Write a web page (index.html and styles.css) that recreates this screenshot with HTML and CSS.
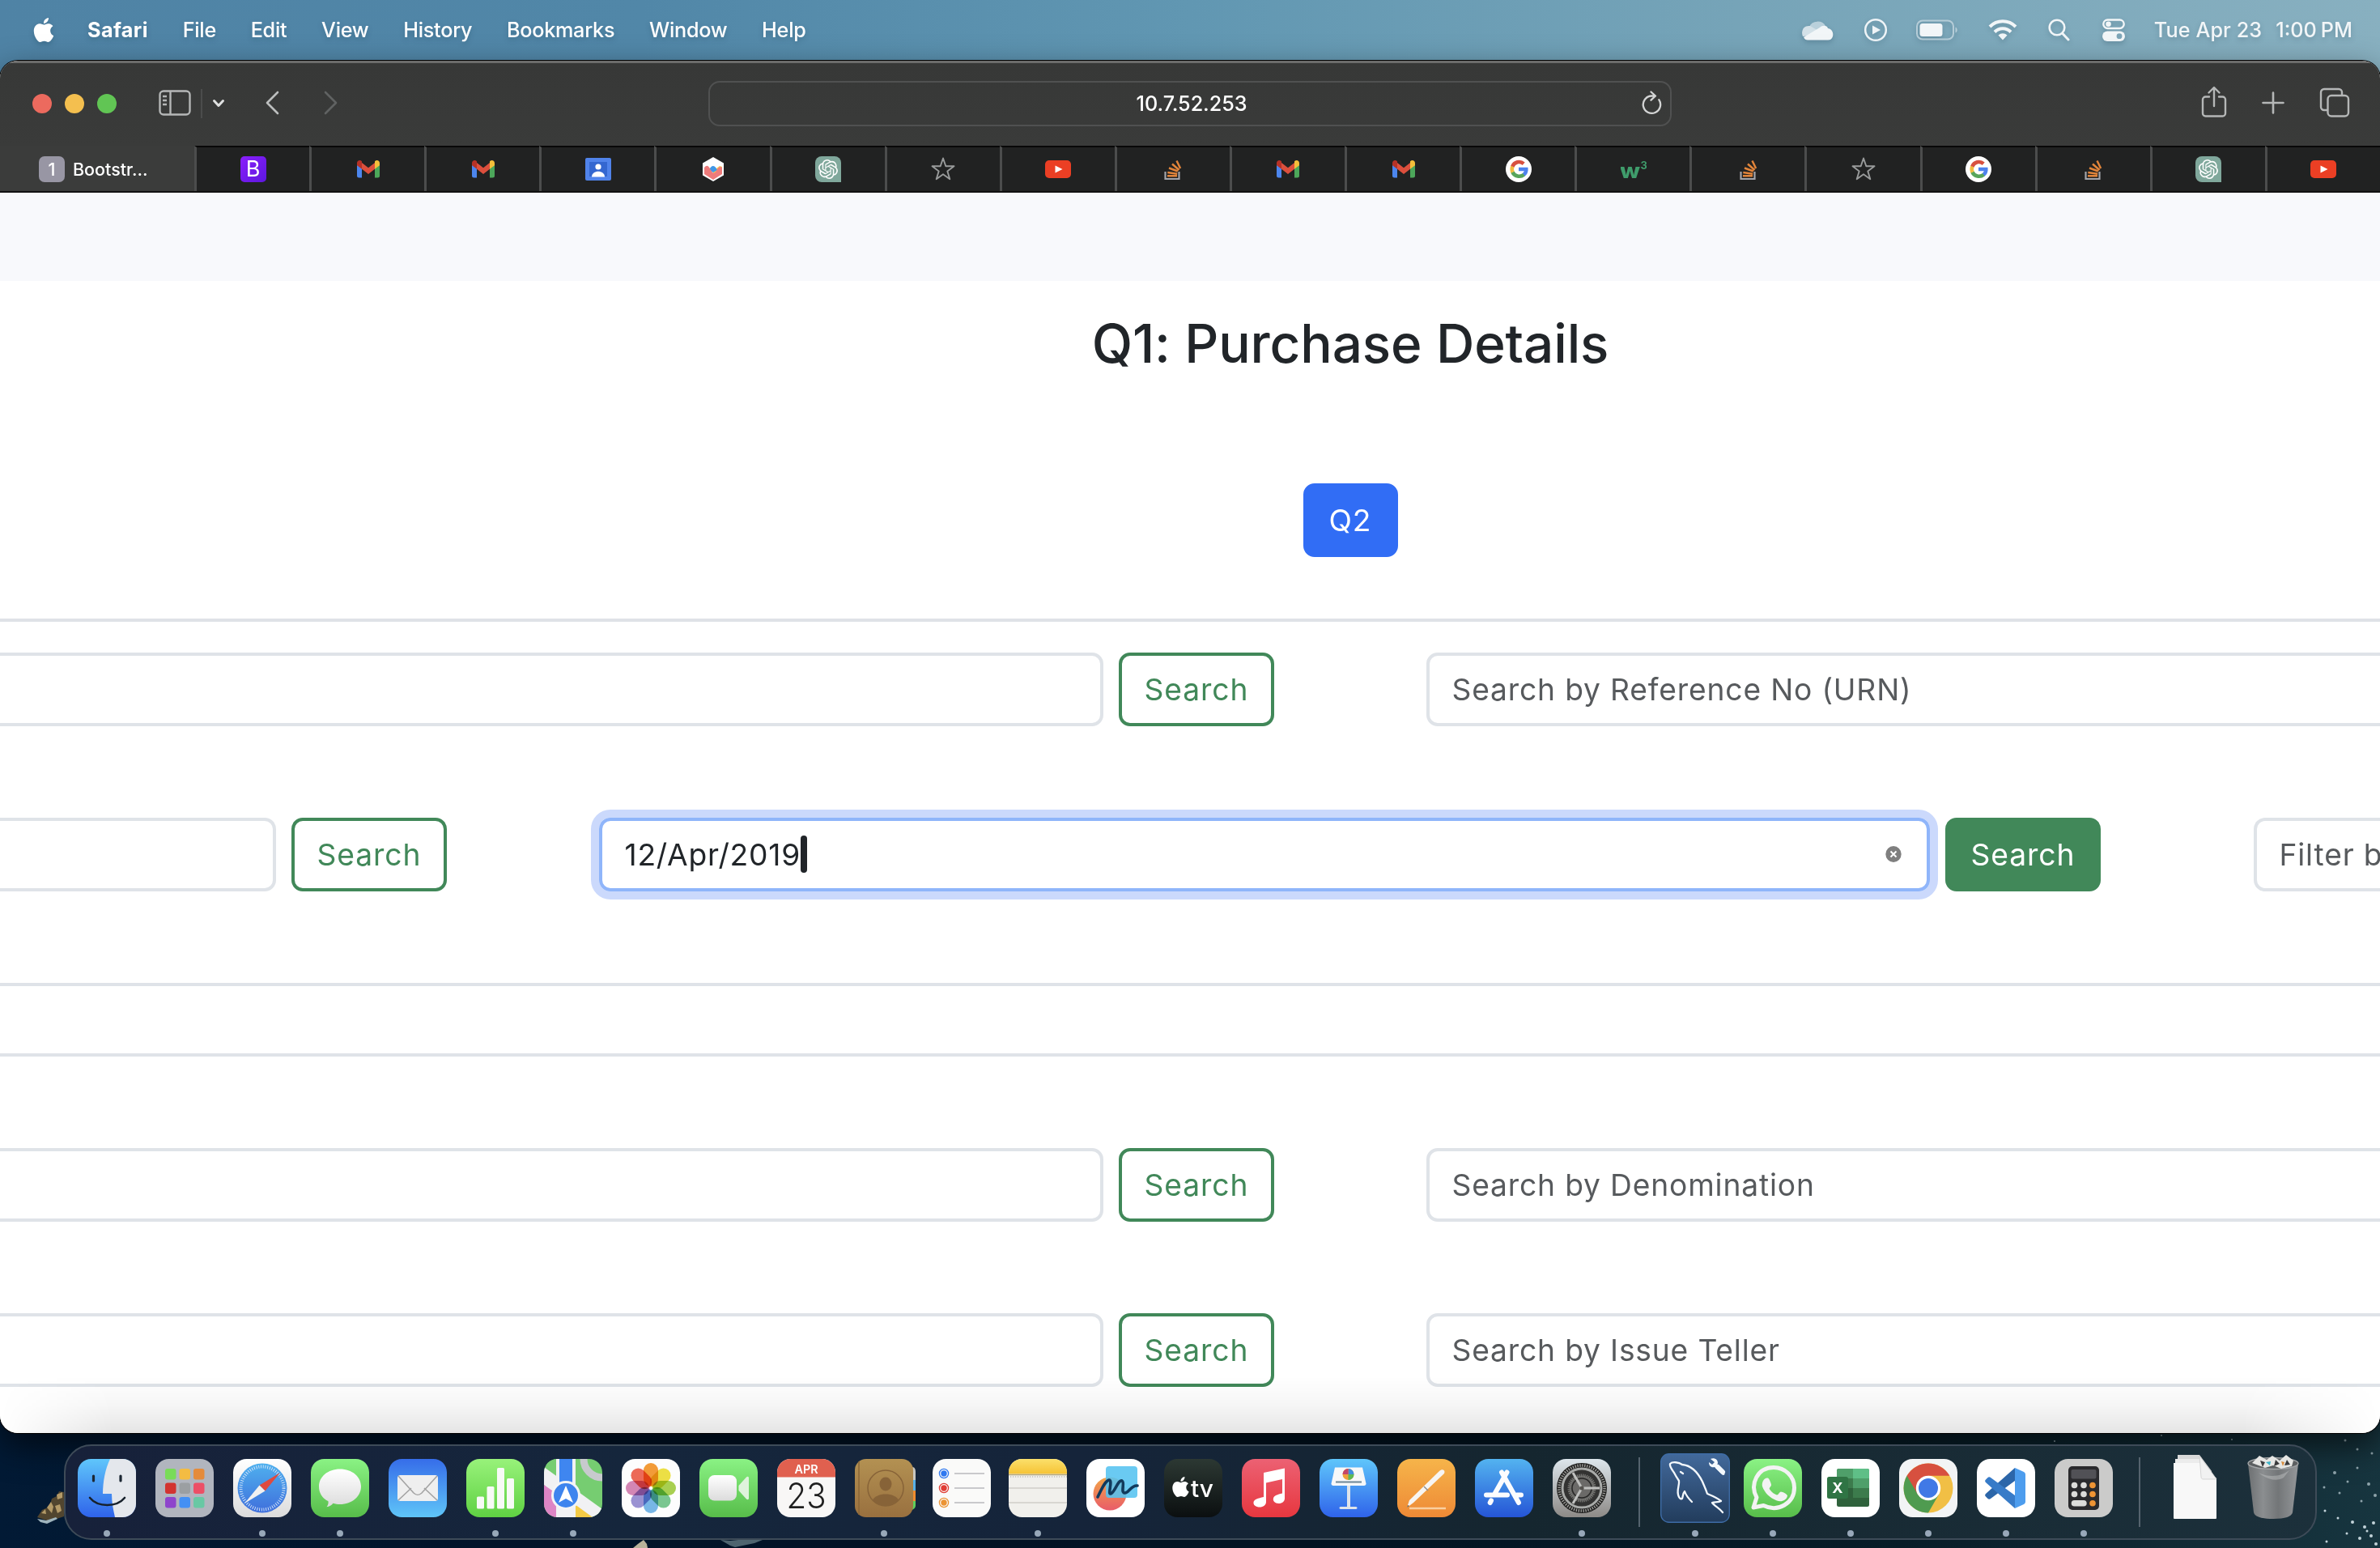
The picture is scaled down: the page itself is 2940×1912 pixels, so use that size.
FILE: index.html
```html
<!DOCTYPE html>
<html lang="en">
<head>
<meta charset="utf-8">
<title>Purchase Details</title>
<link rel="stylesheet" href="styles.css">
</head>
<body>
<svg class="defs" aria-hidden="true">
  <defs>
    <path id="apple" d="M12.152 6.896c-.948 0-2.415-1.078-3.96-1.04-2.04.027-3.91 1.183-4.961 3.014-2.117 3.675-.546 9.103 1.519 12.09 1.013 1.454 2.208 3.09 3.792 3.039 1.52-.065 2.09-.987 3.935-.987 1.831 0 2.35.987 3.96.948 1.637-.026 2.676-1.48 3.676-2.948 1.156-1.688 1.636-3.325 1.662-3.415-.039-.013-3.182-1.221-3.22-4.857-.026-3.04 2.48-4.494 2.597-4.559-1.429-2.09-3.623-2.324-4.39-2.376-2-.156-3.675 1.09-4.61 1.09zM15.53 3.83c.843-1.012 1.4-2.427 1.245-3.83-1.207.052-2.662.805-3.532 1.818-.78.896-1.454 2.338-1.273 3.714 1.338.104 2.715-.688 3.559-1.701"/>
    <symbol id="gmail" viewBox="0 0 32 32">
      <path fill="#4c86ee" d="M2 9v15a2.500 2.500 0 0 0 2.500 2.500H8V14z"/>
      <path fill="#4ca75a" d="M30 9v15a2.500 2.500 0 0 1-2.500 2.500H24V14z"/>
      <path fill="#dc4f3d" d="M8 8l8 6.200L24 8v7.800l-8 6.200-8-6.200z"/>
      <path fill="#b63227" d="M2 8.500C2 5.300 5.500 4 8 6.200v9.600L2 11.300z"/>
      <path fill="#f4bf3a" d="M30 8.500C30 5.300 26.500 4 24 6.200v9.600l6-4.500z"/>
    </symbol>
    <symbol id="classroom" viewBox="0 0 32 32">
      <rect x="0" y="2" width="32" height="28" rx="2" fill="#5083ea"/>
      <rect x="5" y="7" width="22" height="18" fill="#3467d0"/>
      <circle cx="16" cy="13" r="3.600" fill="#fff"/>
      <path d="M8 25.500c0-9 16-9 16 0z" fill="#fff"/>
    </symbol>
    <symbol id="chart" viewBox="0 0 32 32">
      <path fill="#fff" d="M16 1l13 7.500v15L16 31 3 23.500v-15z"/>
      <path fill="#f8c94b" d="M16 18l8-6 3 1v8l-11 2z"/>
      <path fill="#4097e6" d="M11 17c3-7 7-6 10 0l-5 3z"/>
      <path fill="#ee7b7b" d="M5 22v-8c4-5 6-1 8 3 3 5 5 5 8-1 2-3 4-4 6-2v8l-11 7z"/>
    </symbol>
    <symbol id="gpt" viewBox="0 0 32 32">
      <path fill="#80a89c" d="M8 0h16a8 8 0 0 1 8 8v24H8a8 8 0 0 1-8-8V8a8 8 0 0 1 8-8z"/>
      <path fill="#fff" transform="translate(4 4)" d="M22.282 9.821a5.985 5.985 0 0 0-.516-4.911 6.046 6.046 0 0 0-6.510-2.900A6.065 6.065 0 0 0 4.981 4.182a5.985 5.985 0 0 0-3.998 2.900 6.046 6.046 0 0 0 .743 7.097 5.980 5.980 0 0 0 .511 4.911 6.051 6.051 0 0 0 6.515 2.900A5.985 5.985 0 0 0 13.260 24a6.056 6.056 0 0 0 5.772-4.206 5.989 5.989 0 0 0 3.998-2.900 6.056 6.056 0 0 0-.748-7.073zm-9.022 12.608a4.476 4.476 0 0 1-2.876-1.041l.142-.080 4.778-2.758a.795.795 0 0 0 .393-.681v-6.737l2.020 1.169a.071.071 0 0 1 .038.052v5.583a4.504 4.504 0 0 1-4.495 4.494zm-9.661-4.125a4.471 4.471 0 0 1-.535-3.014l.142.085 4.783 2.758a.771.771 0 0 0 .781 0l5.843-3.369v2.332a.080.080 0 0 1-.033.062L9.740 19.950a4.499 4.499 0 0 1-6.141-1.646zM2.341 7.896a4.485 4.485 0 0 1 2.366-1.973V11.600a.766.766 0 0 0 .388.677l5.814 3.354-2.020 1.169a.076.076 0 0 1-.071 0l-4.830-2.787A4.504 4.504 0 0 1 2.341 7.872zm16.596 3.855L13.104 8.364 15.119 7.200a.076.076 0 0 1 .071 0l4.830 2.791a4.494 4.494 0 0 1-.677 8.104v-5.677a.790.790 0 0 0-.407-.667zm2.011-3.023l-.142-.085-4.774-2.782a.776.776 0 0 0-.785 0L9.409 9.230V6.897a.066.066 0 0 1 .028-.062l4.830-2.787a4.499 4.499 0 0 1 6.680 4.660zM8.307 12.863l-2.020-1.164a.080.080 0 0 1-.038-.057V6.074a4.499 4.499 0 0 1 7.376-3.454l-.142.081L8.704 5.459a.795.795 0 0 0-.393.681zm1.098-2.365l2.602-1.500 2.607 1.500v2.999l-2.597 1.500-2.607-1.500z"/>
    </symbol>
    <symbol id="star" viewBox="0 0 32 32">
      <path fill="none" stroke="#999b9b" stroke-width="1.900" stroke-linejoin="round" d="M16 2.500l3.300 9.700 10.200.100-8.200 6.100 3 9.800-8.300-5.900-8.300 5.900 3-9.800-8.200-6.100 10.200-.100z"/>
    </symbol>
    <symbol id="youtube" viewBox="0 0 32 32">
      <rect x="0" y="5" width="32" height="22" rx="5" fill="#eb3f24"/>
      <path d="M12.500 11.500l9 4.500-9 4.500z" fill="#fff"/>
    </symbol>
    <symbol id="stack" viewBox="0 0 32 32">
      <path d="M6.500 19v9h17v-9" fill="none" stroke="#a3a5ab" stroke-width="2.200"/>
      <path d="M9 24.300h12M9.300 20l11.900 1.700M11 14.500l10.800 4M15 9.500l8.500 7.500M20.500 5.500l4.600 9.500" stroke="#e1843a" stroke-width="2.500"/>
    </symbol>
    <symbol id="google" viewBox="0 0 32 32">
      <circle cx="16" cy="16" r="16" fill="#fff"/>
      <g fill="none" stroke-width="4.600">
        <path stroke="#4e82ee" d="M16 16h9.300c.2 3-1 5.300-3.200 7"/>
        <path stroke="#58a55c" d="M22.400 22.700c-4.400 3.700-11.800 2-14-3.200"/>
        <path stroke="#f1bd42" d="M8.500 19.700c-1.100-2.500-1-5 0-7.300"/>
        <path stroke="#d85140" d="M8.300 12.600c2.300-5.500 9.300-7.400 13.900-3.400"/>
      </g>
    </symbol>
    <symbol id="w3" viewBox="0 0 32 32">
      <text x="-1" y="26.500" font-family="Inter" font-weight="800" font-size="26" textLength="25" lengthAdjust="spacingAndGlyphs" fill="#3f9c6b">w</text>
      <text x="24.500" y="16" font-family="Inter" font-weight="700" font-size="13" fill="#3f9c6b">3</text>
    </symbol>
    <linearGradient id="gGreen" x2="0" y2="1"><stop stop-color="#8af284"/><stop offset="1" stop-color="#57bd4a"/></linearGradient>
    <linearGradient id="gBlue" x2="0" y2="1"><stop stop-color="#5fc6fb"/><stop offset="1" stop-color="#2f63ea"/></linearGradient>
    <linearGradient id="gMail" x2="0" y2="1"><stop stop-color="#366de9"/><stop offset="1" stop-color="#5fc5f8"/></linearGradient>
    <linearGradient id="gWhite" x2="0" y2="1"><stop stop-color="#fff"/><stop offset="1" stop-color="#dcdcdc"/></linearGradient>
    <linearGradient id="gLime" x2="0" y2="1"><stop stop-color="#98f27a"/><stop offset="1" stop-color="#5fd143"/></linearGradient>
    <linearGradient id="gMusic" x2="0" y2="1"><stop stop-color="#ec6173"/><stop offset="1" stop-color="#e7373f"/></linearGradient>
    <linearGradient id="gPages" x2="0" y2="1"><stop stop-color="#f6b44a"/><stop offset="1" stop-color="#ee8a36"/></linearGradient>
    <linearGradient id="gStore" x2="0" y2="1"><stop stop-color="#53b3f0"/><stop offset="1" stop-color="#2555d6"/></linearGradient>
    <linearGradient id="gSet" x2="0" y2="1"><stop stop-color="#dde6ec"/><stop offset="1" stop-color="#8d8a87"/></linearGradient>
    <linearGradient id="gSql" x2="0" y2="1"><stop stop-color="#42699b"/><stop offset="1" stop-color="#223c5c"/></linearGradient>
    <linearGradient id="gTv" x2="0" y2="1"><stop stop-color="#2c3833"/><stop offset="1" stop-color="#0b0f10"/></linearGradient>
    <linearGradient id="gBrown" x2="0" y2="1"><stop stop-color="#b39152"/><stop offset="1" stop-color="#99703f"/></linearGradient>
    <linearGradient id="gNote" x2="0" y2="1"><stop stop-color="#fbe06b"/><stop offset="1" stop-color="#f6c335"/></linearGradient>
    <linearGradient id="gCompass" x2="0" y2="1"><stop stop-color="#4fb0ee"/><stop offset="1" stop-color="#3f6fdc"/></linearGradient>
    <linearGradient id="gCan" x2="1" y2="0"><stop stop-color="#6d7072"/><stop offset=".3" stop-color="#8b8e90"/><stop offset=".6" stop-color="#737678"/><stop offset="1" stop-color="#94979a"/></linearGradient>
    <linearGradient id="gFree" x2="0" y2="1"><stop stop-color="#f2a548"/><stop offset="1" stop-color="#e95c69"/></linearGradient>
    <clipPath id="tile"><rect width="72" height="72" rx="16.500"/></clipPath>
  </defs>
</svg>

<div class="desktop">
  <svg class="wallpaper" viewBox="0 0 2940 150" aria-hidden="true">
    <path fill="#51452f" d="M46 112l6-9 9-4 3-10 6-3 3-6 6 1v30l-18 6z"/>
    <path fill="#b39a68" d="M58 100l5-7 3 6-2 8zM70 84l7-3v7l-6 2zM51 107l5-5 1 6zM68 98l6-2 2 8-5 3z"/>
    <path fill="#9fb4bd" d="M46 114l11 2 12-4 2 2-13 6-8-2z"/>
    <path fill="#b9b299" d="M782 150l6-5 7-5 4 5 1 5z"/>
    <path fill="#6f878e" d="M890 140l12 1 10-1 30 0-10 4-24 5-6-2z" opacity=".7"/>
    <g fill="#8ea3ab">
      <circle cx="2538" cy="18" r="1"/><circle cx="2670" cy="11" r="1"/><circle cx="2757" cy="16" r="1"/><circle cx="2897" cy="17" r="1.500"/><circle cx="2912" cy="28" r="1.500"/><circle cx="2930" cy="33" r="1.500"/>
      <circle cx="2884" cy="57" r="2"/><circle cx="2900" cy="68" r="1.500"/><circle cx="2912" cy="51" r="1.500"/><circle cx="2926" cy="71" r="2"/><circle cx="2871" cy="75" r="1.500"/><circle cx="2890" cy="82" r="1.500"/><circle cx="2934" cy="85" r="2"/><circle cx="2917" cy="92" r="1.500"/>
    </g>
    <g fill="#c2d2d9">
      <circle cx="2872" cy="104" r="1.500"/><circle cx="2888" cy="113" r="1.500"/><circle cx="2906" cy="118" r="2"/><circle cx="2921" cy="124" r="2"/><circle cx="2932" cy="119" r="2"/><circle cx="2899" cy="132" r="1.500"/><circle cx="2915" cy="138" r="2"/><circle cx="2929" cy="135" r="2"/><circle cx="2874" cy="142" r="1.500"/><circle cx="2935" cy="145" r="2"/><circle cx="2924" cy="129" r="1.500"/>
    </g>
  </svg>

  <header class="menubar">
    <svg class="apple-logo" viewBox="0 0 24 24"><use href="#apple" fill="#fff"/></svg>
    <nav class="menus">
      <span class="menu menu-app">Safari</span><span class="menu">File</span><span class="menu">Edit</span><span class="menu">View</span><span class="menu">History</span><span class="menu">Bookmarks</span><span class="menu">Window</span><span class="menu">Help</span>
    </nav>
    <div class="status">
      <svg width="40" height="28" viewBox="0 0 40 28"><path fill="#b9d0db" d="M10 10a11 10 0 0 1 20-1l-10 12z"/><path fill="#d3e1e8" d="M2 22C-1 14 4 8 11 9l17 10z"/><path fill="#f2f6f8" d="M3 23l20-12c3-3 9-3 10 1 6 1 7 7 6 10-1 3-3 4.500-6 4.500H8c-2 0-4-1-5-3.500z"/></svg>
      <svg width="30" height="30" viewBox="0 0 30 30"><circle cx="15" cy="15" r="12.800" fill="none" stroke="#eef4f7" stroke-width="2.500"/><path d="M11 9.500l10 5.500-10 5.500z" fill="#eef4f7"/></svg>
      <svg width="52" height="26" viewBox="0 0 52 26"><rect x="1" y="1.500" width="45" height="23" rx="7" fill="none" stroke="#b5cdd8" stroke-width="2"/><rect x="4.500" y="5" width="28" height="16" rx="3.500" fill="#f2f6f8"/><path d="M48.500 9.500c3 1 3 6 0 7z" fill="#b5cdd8"/></svg>
      <svg width="36" height="27" viewBox="0 0 36 27"><g fill="none" stroke="#f2f6f8" stroke-width="4"><path d="M2 10a22.500 22.500 0 0 1 32 0"/><path d="M8 16.500a14 14 0 0 1 20 0"/></g><path fill="#f2f6f8" d="M18 26.500l-5.500-6a8 8 0 0 1 11 0z"/></svg>
      <svg width="27" height="28" viewBox="0 0 27 28"><circle cx="11" cy="11" r="9.300" fill="none" stroke="#f2f6f8" stroke-width="2.600"/><path d="M17.500 18l7.500 8" stroke="#f2f6f8" stroke-width="3" stroke-linecap="round"/></svg>
      <svg width="28" height="28" viewBox="0 0 28 28"><rect x="1.300" y="1.500" width="25.400" height="10.500" rx="5.250" fill="none" stroke="#f2f6f8" stroke-width="2.400"/><circle cx="7.500" cy="6.800" r="3.300" fill="#f2f6f8"/><rect x="0" y="15.500" width="28" height="12.500" rx="6.250" fill="#f2f6f8"/><circle cx="21" cy="21.700" r="3.400" fill="#7ea6b8"/></svg>
      <span class="clock"><span class="date">Tue Apr 23</span><span class="time"><span>1:00</span><span>PM</span></span></span>
    </div>
  </header>

  <main class="window">
    <div class="toolbar">
      <div class="tools-left">
        <span class="light red"></span><span class="light yellow"></span><span class="light green"></span>
        <svg class="ic-sidebar" width="40" height="32" viewBox="0 0 40 32" fill="none" stroke="#b5b7b7" stroke-width="2.400"><rect x="1.500" y="1.500" width="37" height="29" rx="4.500"/><path d="M14.500 2v28M5 8h5M5 13h5M5 18h5"/></svg>
        <span class="tool-split"></span>
        <svg class="ic-down" width="16" height="12" viewBox="0 0 16 12"><path d="M2.500 2.500l5.500 6 5.500-6" fill="none" stroke="#dfe0e0" stroke-width="3" stroke-linecap="round" stroke-linejoin="round"/></svg>
        <svg class="ic-back" width="18" height="30" viewBox="0 0 18 30"><path d="M16 2L3 15l13 13" fill="none" stroke="#bcbebe" stroke-width="2.600" stroke-linecap="round" stroke-linejoin="round"/></svg>
        <svg class="ic-forward" width="18" height="30" viewBox="0 0 18 30"><path d="M2 2l13 13L2 28" fill="none" stroke="#606262" stroke-width="2.600" stroke-linecap="round" stroke-linejoin="round"/></svg>
      </div>
      <div class="address">
        <span class="url">10.7.52.253</span>
        <svg class="ic-reload" width="26" height="30" viewBox="0 0 26 30"><path d="M22.300 11.200A10.700 10.700 0 1 1 13 6.500h4.500M12.500 1.500l5.500 5-5.500 5.200" fill="none" stroke="#d3d4d4" stroke-width="2.300" stroke-linecap="round" stroke-linejoin="round"/></svg>
      </div>
      <div class="tools-right">
        <svg class="ic-share" width="32" height="40" viewBox="0 0 32 40" fill="none" stroke="#b5b7b7" stroke-width="2.400" stroke-linecap="round" stroke-linejoin="round"><path d="M10 13.500H5.500a3.500 3.500 0 0 0-3.500 3.500v17a3.500 3.500 0 0 0 3.500 3.500h21A3.500 3.500 0 0 0 30 34V17a3.500 3.500 0 0 0-3.500-3.500H22M16 25V3M9.500 8.500L16 2l6.500 6.500"/></svg>
        <svg width="28" height="28" viewBox="0 0 28 28"><path d="M14 1.500v25M1.500 14h25" stroke="#b5b7b7" stroke-width="2.600" stroke-linecap="round"/></svg>
        <svg width="38" height="38" viewBox="0 0 38 38" fill="none" stroke="#b5b7b7" stroke-width="2.400"><rect x="10.500" y="10" width="25.500" height="25.500" rx="4.500"/><path d="M10 28H6a4 4 0 0 1-4-4V6a4 4 0 0 1 4-4h18a4 4 0 0 1 4 4v4"/></svg>
      </div>
    </div>

    <div class="tabs">
      <div class="tab-active"><span class="tab-badge">1</span><span>Bootstr…</span></div>
      <div class="tab"><span class="favicon-b">B</span></div>
      <div class="tab"><svg><use href="#gmail"/></svg></div>
      <div class="tab"><svg><use href="#gmail"/></svg></div>
      <div class="tab"><svg><use href="#classroom"/></svg></div>
      <div class="tab"><svg><use href="#chart"/></svg></div>
      <div class="tab"><svg><use href="#gpt"/></svg></div>
      <div class="tab"><svg><use href="#star"/></svg></div>
      <div class="tab"><svg><use href="#youtube"/></svg></div>
      <div class="tab"><svg><use href="#stack"/></svg></div>
      <div class="tab"><svg><use href="#gmail"/></svg></div>
      <div class="tab"><svg><use href="#gmail"/></svg></div>
      <div class="tab"><svg><use href="#google"/></svg></div>
      <div class="tab"><svg class="w3"><use href="#w3"/></svg></div>
      <div class="tab"><svg><use href="#stack"/></svg></div>
      <div class="tab"><svg><use href="#star"/></svg></div>
      <div class="tab"><svg><use href="#google"/></svg></div>
      <div class="tab"><svg><use href="#stack"/></svg></div>
      <div class="tab"><svg><use href="#gpt"/></svg></div>
      <div class="tab"><svg><use href="#youtube"/></svg></div>
    </div>

    <div class="page">
      <div class="navbar"></div>
      <div class="heading">
        <h3 class="title">Q1: Purchase Details</h3>
        <span class="btn btn-primary">Q2</span>
      </div>
      <div class="rule"></div>
      <div class="filters">
        <div class="row wide">
          <div class="field"></div><span class="btn btn-outline">Search</span>
          <div class="field last">Search by Reference No (URN)</div>
        </div>
        <div class="row thirds">
          <div class="field"></div><span class="btn btn-outline">Search</span>
          <div class="field focus mid"><span class="value">12/Apr/2019</span><span class="caret"></span>
            <svg class="clear" width="20" height="22" viewBox="0 0 20 22"><ellipse cx="10" cy="11" rx="9.700" ry="10" fill="#7f7f7f"/><path d="M6.500 7.500l7 7M13.500 7.500l-7 7" stroke="#fff" stroke-width="2"/></svg>
          </div><span class="btn btn-solid">Search</span>
          <div class="field last">Filter by</div>
        </div>
        <div class="row full"><div class="field"></div></div>
        <div class="row wide">
          <div class="field"></div><span class="btn btn-outline">Search</span>
          <div class="field last">Search by Denomination</div>
        </div>
        <div class="row wide">
          <div class="field"></div><span class="btn btn-outline">Search</span>
          <div class="field last">Search by Issue Teller</div>
        </div>
      </div>
    </div>
  </main>

  <footer class="dock">
    <div class="app open"><svg viewBox="0 0 72 72"><g clip-path="url(#tile)"><rect width="72" height="72" fill="url(#gBlue)"/><path fill="#e4e7ec" d="M40 0h32v72H46c-2-9-4-18-4-29H31c0-15 3-31 9-43z"/></g><path d="M19.500 21v6M53 21v6" stroke="#1c2733" stroke-width="3.200" stroke-linecap="round"/><path d="M15 48c10 12 33 12 43 0" fill="none" stroke="#17212c" stroke-width="2.600" stroke-linecap="round"/></svg></div>
    <div class="app"><svg viewBox="0 0 72 72"><rect width="72" height="72" rx="16.500" fill="#b1b5be"/><g><rect x="12" y="12" width="13.500" height="13.500" rx="3" fill="#79dc58"/><rect x="29.500" y="12" width="13.500" height="13.500" rx="3" fill="#f3bc43"/><rect x="47" y="12" width="13.500" height="13.500" rx="3" fill="#e58b3a"/><rect x="12" y="29.500" width="13.500" height="13.500" rx="3" fill="#d23330"/><rect x="29.500" y="29.500" width="13.500" height="13.500" rx="3" fill="#9b9fa2"/><rect x="47" y="29.500" width="13.500" height="13.500" rx="3" fill="#ec4f66"/><rect x="12" y="47" width="13.500" height="13.500" rx="3" fill="#8e45cc"/><rect x="29.500" y="47" width="13.500" height="13.500" rx="3" fill="#4490f4"/><rect x="47" y="47" width="13.500" height="13.500" rx="3" fill="#68c8a4"/></g></svg></div>
    <div class="app open"><svg viewBox="0 0 72 72"><rect width="72" height="72" rx="16.500" fill="url(#gWhite)"/><circle cx="36" cy="36" r="30.500" fill="url(#gCompass)"/><circle cx="36" cy="36" r="26.500" fill="none" stroke="#d9e9fa" stroke-width="4" stroke-dasharray=".9 1.875"/><path fill="#df4a3f" d="M58 17L39.500 39.500 32.500 32.500z"/><path fill="#f1f1f1" d="M14 55l18.500-22.500 7 7z"/></svg></div>
    <div class="app open"><svg viewBox="0 0 72 72"><rect width="72" height="72" rx="16.500" fill="url(#gGreen)"/><path fill="url(#gWhite)" d="M36 12.500c15 0 26 9.500 26 21.500S51 56 36 56c-3 0-6-.4-8.500-1.200-2 2.500-4.500 4-8 4.400 1.500-2 2.500-4.500 2-7C14 48.500 10 42 10 34c0-12 11-21.500 26-21.500z"/></svg></div>
    <div class="app"><svg viewBox="0 0 72 72"><rect width="72" height="72" rx="16.500" fill="url(#gMail)"/><rect x="11" y="20" width="50" height="32" rx="3.500" fill="#efefef"/><path d="M12 51l16-15M60 51L44 36M12 21l19 21c3 3 7 3 10 0l19-21" fill="none" stroke="#a3a3a3" stroke-width="1.600"/></svg></div>
    <div class="app open"><svg viewBox="0 0 72 72"><rect width="72" height="72" rx="16.500" fill="url(#gLime)"/><g fill="#f7faf6"><rect x="13" y="46.500" width="9" height="15" rx="1.500"/><rect x="25.500" y="34" width="9" height="27.500" rx="1.500"/><rect x="38" y="11" width="9" height="50.500" rx="1.500"/><rect x="50" y="24" width="9" height="37.500" rx="1.500"/></g></svg></div>
    <div class="app open"><svg viewBox="0 0 72 72"><g clip-path="url(#tile)"><rect width="72" height="72" fill="#76cd71"/><path fill="#f1f1f3" d="M0 10l72 52v10H40L0 32z"/><path fill="#dd85c5" d="M0 32l17 12v28H0z"/><path fill="#f4ca45" d="M38 56l22 16H38z"/><path fill="#76cd71" d="M0 0h18v18L0 6z"/><path fill="#f1f1f3" d="M15 0h24v72H15z"/><path fill="#3f86f0" d="M19 0h16v42H19z"/><circle cx="72" cy="0" r="23" fill="none" stroke="#c7cacd" stroke-width="9"/><circle cx="27" cy="45" r="18" fill="#f4f4f6"/><circle cx="27" cy="45" r="15" fill="#3e84ee"/><path fill="#fff" d="M27 33l9 21-9-5-9 5z"/></g></svg></div>
    <div class="app"><svg viewBox="0 0 72 72"><rect width="72" height="72" rx="16.500" fill="#fdfdfd"/><g class="petals"><rect x="27" y="5" width="18" height="29" rx="9" fill="#f29b38"/><rect x="27" y="5" width="18" height="29" rx="9" fill="#ecdf45" transform="rotate(45 36 36)"/><rect x="27" y="5" width="18" height="29" rx="9" fill="#a8cf50" transform="rotate(90 36 36)"/><rect x="27" y="5" width="18" height="29" rx="9" fill="#7ac690" transform="rotate(135 36 36)"/><rect x="27" y="5" width="18" height="29" rx="9" fill="#78b6e6" transform="rotate(180 36 36)"/><rect x="27" y="5" width="18" height="29" rx="9" fill="#9a92d2" transform="rotate(225 36 36)"/><rect x="27" y="5" width="18" height="29" rx="9" fill="#d386b4" transform="rotate(270 36 36)"/><rect x="27" y="5" width="18" height="29" rx="9" fill="#ec6a58" transform="rotate(315 36 36)"/></g></svg></div>
    <div class="app"><svg viewBox="0 0 72 72"><rect width="72" height="72" rx="16.500" fill="url(#gGreen)"/><rect x="11" y="20" width="35" height="31.500" rx="7.500" fill="url(#gWhite)"/><path fill="#dff3dc" d="M48.500 33l9-10c2-2 3.500-1.500 3.500 1v24c0 2.500-1.500 3-3.500 1l-9-10z"/></svg></div>
    <div class="app"><svg viewBox="0 0 72 72"><g clip-path="url(#tile)"><rect width="72" height="72" fill="#f8f7f6"/><rect width="72" height="22.500" fill="#e0604f"/></g><text x="36" y="17.500" text-anchor="middle" font-family="Inter" font-weight="600" font-size="14.500" textLength="29" lengthAdjust="spacingAndGlyphs" fill="#fff">APR</text><text x="36" y="60.500" text-anchor="middle" font-family="Inter" font-weight="300" font-size="44" textLength="49" lengthAdjust="spacingAndGlyphs" fill="#1f1f1f">23</text></svg></div>
    <div class="app open contacts"><svg viewBox="0 0 72 72"><path d="M64 10h7c3 0 4 3 4 6v10H64z" fill="#c9c7c0"/><path d="M66 26h9v13h-9z" fill="#59b1e6"/><path d="M66 39h9v13h-9z" fill="#f08c2e"/><path d="M66 52h9v5c0 4-3 6-7 6z" fill="#60cf5b"/><rect width="72" height="72" rx="14" fill="url(#gBrown)"/><path d="M5 3v66" stroke="#8a6637" stroke-width="1.500"/><circle cx="38" cy="36" r="22" fill="none" stroke="#876338" stroke-width="1.500"/><ellipse cx="38" cy="31" rx="7.500" ry="8.500" fill="#876338"/><path fill="#876338" d="M22 51c4-10 28-10 32 0-9 9-23 9-32 0z"/></svg></div>
    <div class="app reminders"><svg viewBox="0 0 72 72"><rect width="72" height="72" rx="16.500" fill="#fafaf9"/><path d="M27 18h37M27 36h37M27 54h37" stroke="#b9b9bd" stroke-width="1.500"/><g fill="none" stroke-width="1.300"><circle cx="14" cy="18" r="5.600" stroke="#2f78f0"/><circle cx="14" cy="36" r="5.600" stroke="#e03c34"/><circle cx="14" cy="54" r="5.600" stroke="#eb9434"/></g><circle cx="14" cy="18" r="3.700" fill="#2f78f0"/><circle cx="14" cy="36" r="3.700" fill="#e03c34"/><circle cx="14" cy="54" r="3.700" fill="#eb9434"/></svg></div>
    <div class="app open"><svg viewBox="0 0 72 72"><g clip-path="url(#tile)"><rect width="72" height="72" fill="#f1f0ec"/><rect width="72" height="18.500" fill="url(#gNote)"/><path d="M0 19.500h72" stroke="#b3a77e" stroke-width="1.400"/><path d="M2 22h70" stroke="#a9a69d" stroke-width="1.200" stroke-dasharray="1.200 1.800"/><path d="M0 36h72M0 54h72" stroke="#cfcdc8" stroke-width="1.500"/></g></svg></div>
    <div class="app"><svg viewBox="0 0 72 72"><rect width="72" height="72" rx="16.500" fill="#fff"/><circle cx="29" cy="43" r="20.500" fill="url(#gFree)"/><rect x="24" y="9" width="39" height="39" rx="4" fill="#55c3f0" fill-opacity=".88"/><path d="M14 47c5-10 9-20 14-21 5 0-2 18 2 17 5-1 9-18 14-16 4 2-2 14 3 15s8-10 16-9" fill="none" stroke="#123a5c" stroke-width="3.600" stroke-linecap="round"/></svg></div>
    <div class="app"><svg viewBox="0 0 72 72"><rect width="72" height="72" rx="16.500" fill="url(#gTv)"/><use href="#apple" fill="#fff" transform="translate(8 22) scale(1.040)"/><text x="33" y="47" font-family="Inter" font-weight="500" font-size="29" textLength="28" lengthAdjust="spacingAndGlyphs" fill="#fff">tv</text></svg></div>
    <div class="app"><svg viewBox="0 0 72 72"><rect width="72" height="72" rx="16.500" fill="url(#gMusic)"/><path fill="#fff" d="M27 17l26-5.500v37c0 4-3 6.500-7.500 6.500S38 52 39 48.500s5-4.500 11-6V25l-20 4.500V53c0 4-3.500 6.500-8 6.500S14 57 14.500 53.500 20 48.500 27 47z"/></svg></div>
    <div class="app"><svg viewBox="0 0 72 72"><rect width="72" height="72" rx="16.500" fill="url(#gBlue)"/><path fill="#f7f8f9" d="M19 10.500h34l4.500 20c0 1.500-1 2.500-2.500 2.500H17c-1.500 0-2.500-1-2.500-2.500z"/><path d="M20 28.500h32" stroke="#6d8797" stroke-width="2"/><circle cx="35.500" cy="19" r="7" fill="#f0a13a"/><path d="M35.500 19v-7a7 7 0 0 1 7 7z" fill="#3f8fe0"/><path d="M35.500 19h7a7 7 0 0 1-7 7z" fill="#5cb956"/><path d="M35.500 19v-7a7 7 0 0 0-7 7z" fill="#c34769"/><path fill="#dfe4ea" d="M34 33h4v26h7c2 0 2 3 0 3H26c-2 0-2-3 0-3h8z"/></svg></div>
    <div class="app"><svg viewBox="0 0 72 72"><rect width="72" height="72" rx="16.500" fill="url(#gPages)"/><path d="M15 61h45" stroke="#f9cf9f" stroke-width="2.500"/><path fill="#f7f5f2" d="M12 60l3-9 37-36c3-3 8-2 6 3L20 54z"/><path d="M33 34l5 5" stroke="#8c8c8c" stroke-width="1.400"/><path fill="#6b5945" d="M12 60l1-3 2 1z"/></svg></div>
    <div class="app"><svg viewBox="0 0 72 72"><rect width="72" height="72" rx="16.500" fill="url(#gStore)"/><g stroke="#fbfcfe" stroke-width="6" stroke-linecap="round"><path d="M14 44.500h26M52 44.500h5M39.500 16.500L25 42M20 51.500l-1.300 2.500M33 16.500L54 54"/></g></svg></div>
    <div class="app open"><svg viewBox="0 0 72 72"><rect width="72" height="72" rx="16.500" fill="url(#gSet)"/><circle cx="36" cy="36" r="31" fill="#1f1f1e"/><circle cx="36" cy="36" r="28" fill="none" stroke="#9d9d9a" stroke-width="3.600" stroke-dasharray="1.400 1.532"/><circle cx="36" cy="36" r="24" fill="#333332" stroke="#a9aba9" stroke-width="3"/><circle cx="36" cy="36" r="15.500" fill="#636361" stroke="#777774" stroke-width="4" stroke-dasharray="1.300 1"/><circle cx="36" cy="36" r="12" fill="#6b6a68" stroke="#272726" stroke-width="1.500"/><path d="M36 36h22M36 36L25 17M36 36L25 55" stroke="#bfc0be" stroke-width="3"/><circle cx="36" cy="36" r="2.600" fill="#55534f"/></svg></div>
    <span class="dock-split first"></span>
    <div class="app open big"><svg viewBox="0 0 86 86"><rect x=".7" y=".7" width="84.600" height="84.600" rx="10" fill="url(#gSql)" stroke="#3e6ca6" stroke-width="1.400"/><path fill="none" stroke="#f4f9fd" stroke-width="2.300" stroke-linejoin="round" stroke-linecap="round" d="M27 14c-4-3-12-4-15-1-1 3 3 8 5 11 2 4 4 7 6 10 1 7-4 12 0 20 1 2 3 3 4 2 1-3 1-7 3-9 2 6 5 9 9 13M27 14c12 1 20 11 25 21 2 5 4 9 6 15 5 2 11 4 17 9-3 2-8 1-11 2 3 4 9 7 13 12M25 23l3 2"/><path fill="#f4f9fd" d="M62 7c4-2 9 0 9 5l-1 3 9 9c2 3-2 4-3 2l-9-9c-4 1-7-1-7-6l4 3 3-3z"/><path d="M71 17l6 6" stroke="#f4f9fd" stroke-width="6" stroke-linecap="round"/></svg></div>
    <div class="app open"><svg viewBox="0 0 72 72"><rect width="72" height="72" rx="16.500" fill="url(#gGreen)"/><path fill="none" stroke="#f3f3f3" stroke-width="5" stroke-linejoin="round" d="M12 60l4-12.500C7 31 17 10.500 37 10.500c14 0 25.500 11 25.500 25 0 19-20 31-38 22z"/><path fill="#f3f3f3" d="M29.500 23.500c2 0 5 8 4.500 9-.5 2-3 3-2 5 3 4 6 6 9 7 2 0 3-4 5-4s8 3 8 5c-1 6-8 8-13 6C32 48 26 42 23 34c-1-5 2-11 6.500-10.500z"/></svg></div>
    <div class="app open"><svg viewBox="0 0 72 72"><rect width="72" height="72" rx="16.500" fill="#fff"/><rect x="19" y="12" width="40" height="47" rx="2.500" fill="#2f623c"/><path fill="#5fbf87" d="M39 12h18a2 2 0 0 1 2 2v10H39z"/><path fill="#4f9f6a" d="M21.500 12H39v12H19v-9.500a2.500 2.500 0 0 1 2.500-2.500zM39 24h20v12H39z"/><path fill="#3c7b4c" d="M19 24h20v12H19zM39 36h20v12H39z"/><rect x="7" y="22" width="26" height="27" rx="2.500" fill="#2f7444"/><text x="20" y="42" text-anchor="middle" font-family="Inter" font-weight="700" font-size="18" fill="#fff">X</text></svg></div>
    <div class="app open"><svg viewBox="0 0 72 72"><rect width="72" height="72" rx="16.500" fill="#f2f4f5"/><circle cx="36" cy="36" r="30.500" fill="#f1bf45"/><path fill="#4f9b50" d="M36 36L9.600 20.800A30.500 30.500 0 0 0 36 66.500L49.200 43.600z"/><path fill="#d7503f" d="M9.600 20.800A30.500 30.500 0 0 1 62.400 20.800H36L22.800 43.600z"/><circle cx="36" cy="36" r="15.200" fill="#fff"/><circle cx="36" cy="36" r="12" fill="#4079e6"/></svg></div>
    <div class="app open"><svg viewBox="0 0 72 72"><rect width="72" height="72" rx="16.500" fill="#fff"/><path fill="#2c66a9" d="M11.500 42.500L47 11v16L17 49c-1 1-2.500 1-3.500 0l-2.500-2.500c-1.500-1-1-3 .5-4z"/><path fill="#377bc8" d="M11.500 29.500L47 61V45L17 23c-1-1-2.500-1-3.500 0L11 25.500c-1.500 1-1 3 .5 4z"/><path fill="#4d9dee" d="M47 61V11l11 5c1.500 1 2 2 2 3.500v33c0 1.500-.5 2.500-2 3.500z"/></svg></div>
    <div class="app open"><svg viewBox="0 0 72 72"><rect width="72" height="72" rx="16.500" fill="#cbcbca"/><rect x="17" y="9" width="38" height="54" rx="5" fill="#2a2a2d"/><rect x="20.500" y="13" width="31" height="11.500" rx="2" fill="#515156"/><g fill="#dcdcda"><circle cx="24.500" cy="32.500" r="3.800"/><circle cx="36" cy="32.500" r="3.800"/><circle cx="24.500" cy="43.500" r="3.800"/><circle cx="36" cy="43.500" r="3.800"/><rect x="20.700" y="51" width="19" height="7.600" rx="3.800"/></g><g fill="#ef9434"><circle cx="47" cy="32.500" r="3.800"/><circle cx="47" cy="43.500" r="3.800"/><circle cx="47" cy="54.800" r="3.800"/></g></svg></div>
    <span class="dock-split"></span>
    <div class="app big"><svg viewBox="0 0 86 86"><path fill="#d9d9d9" d="M21 2h27l15 20v6H21z"/><path fill="#ececec" d="M18 7h31l15 20v4H18z"/><path fill="#f8f8f8" d="M16 12h33l20 19v49a1 1 0 0 1-1 1H17a1 1 0 0 1-1-1z"/><path fill="#f1f1f1" stroke="#cdcdcd" stroke-width=".8" d="M48 3l2 26c0 2 1 3 3 3l16 0c-6-9-14-19-21-29z"/></svg></div>
    <div class="app big"><svg viewBox="0 0 86 86"><path fill="url(#gCan)" d="M12 13l7 60c1 5 9 8 24 8s23-3 24-8l7-60z"/><ellipse cx="43" cy="12.500" rx="31" ry="7" fill="#5d6062" stroke="#a2a5a7" stroke-width="1.400"/><path fill="#e6e6e4" d="M17 12l9-9 9 5 7-5 9 6 8-7 9 7-2 7-13 3-10-4-10 3z"/><path fill="#3a3a3c" d="M27 9l6 2-3 6zM46 8l5 5-7 3zM60 8l4 6-7 1z"/><path fill="#3cb4c8" d="M34 11l6-1-1 5z"/><path fill="#d98c3c" d="M53 10l4 1-2 5z"/><path d="M25 24c14 7 29 4 38-3L56 30c-8 5-20 3-31-6z" fill="#c3c5c6" opacity=".45"/></svg></div>
  </footer>
</div>
</body>
</html>
```
FILE: styles.css
```css
* { box-sizing: border-box; }
body { margin: 0; font-family: Inter, "Liberation Sans", sans-serif; }
.defs { position: absolute; width: 0; height: 0; }
svg { display: block; flex: none; }

.desktop {
  position: relative;
  display: flex;
  flex-direction: column;
  width: 2940px;
  height: 1912px;
  overflow: hidden;
  background:
    linear-gradient(90deg, #4f83a5 0, #5187a8 27%, #6197b2 50%, #76a4b8 73%, #88b0c0 100%) 0 0 / 100% 100px no-repeat,
    linear-gradient(90deg, #021a35 0, #01142a 20%, #011322 55%, #071d28 80%, #17353f 100%);
}
.wallpaper { position: absolute; left: 0; bottom: 0; width: 2940px; height: 150px; }

/* Menu bar */
.menubar {
  display: flex;
  align-items: center;
  height: 75px;
  padding: 0 34px 2px 39px;
  color: #fff;
  font-size: 25.2px;
  font-weight: 500;
}
.menubar > svg, .menus, .status { filter: drop-shadow(0 3px 3px rgba(0, 30, 50, .2)); }
.apple-logo { width: 30px; height: 30px; }
.menus { display: flex; gap: 42.700px; margin-left: 39px; letter-spacing: -.25px; }
.menu-app { font-weight: 700; letter-spacing: .4px; }
.status { display: flex; align-items: center; margin-left: auto; color: #f2f6f8; }
.status svg:nth-child(2) { margin-left: 37px; }
.status svg:nth-child(3) { margin-left: 35px; }
.status svg:nth-child(4) { margin-left: 37px; }
.status svg:nth-child(5) { margin-left: 38px; }
.status svg:nth-child(6) { margin-left: 40px; }
.clock { display: flex; gap: 17px; margin-left: 36px; white-space: nowrap; }
.date { letter-spacing: .1px; }
.time { display: flex; gap: 5px; letter-spacing: 0; }

/* Browser window */
.window {
  position: relative;
  display: flex;
  flex-direction: column;
  height: 1695px;
  border-radius: 22px;
  overflow: hidden;
  background: #fff;
  box-shadow: 0 0 0 1px #000, 0 16px 40px rgba(0, 0, 0, .6);
}
.toolbar {
  display: grid;
  grid-template-columns: 1fr 1190px 1fr;
  align-items: center;
  height: 105px;
  padding: 0 37px 2px 40px;
  background: linear-gradient(#373837, #3a3b3a);
  border-top: 3px solid #6c6c6b;
}
.tools-left, .tools-right { display: flex; align-items: center; }
.light { width: 24px; height: 24px; margin-right: 16px; border-radius: 50%; }
.red { background: #ec6a5e; }
.yellow { background: #f4bf4f; }
.green { background: #61c554; }
.ic-sidebar { margin: 0 0 2px 36px; }
.tool-split { width: 2px; height: 36px; margin: 0 12px 0 12px; background: #4b4c4c; }
.ic-back { margin: 0 0 2px 49px; }
.ic-forward { margin: 0 0 2px 55px; }
.address {
  position: relative;
  display: flex;
  align-items: center;
  justify-content: center;
  height: 56px;
  border: 2px solid #505151;
  border-radius: 14px;
  margin-left: -2px;
  margin-right: 2px;
  color: #fff;
  font-size: 25.2px;
}
.url { letter-spacing: -.05px; margin-left: 5px; font-weight: 500; }
.ic-reload { position: absolute; right: 10px; top: 10px; }
.tools-right { justify-content: flex-end; gap: 43px; padding-bottom: 2px; }
.ic-share { margin-bottom: 2px; }

.tabs {
  display: grid;
  grid-template-columns: 240px repeat(19, 1fr);
  height: 58px;
  background: #212222;
  border-bottom: 2px solid #111;
}
.tab, .tab-active { display: flex; align-items: center; justify-content: center; }
.tab { border-left: 3px solid #4c4d4d; border-top: 2px solid #080808; }
.tab svg { width: 32px; height: 32px; overflow: visible; }
.tab-active {
  justify-content: flex-start;
  gap: 10px;
  padding: 2px 0 0 48px;
  background: #3b3c3b;
  color: #fff;
  font-size: 21.5px;
  font-weight: 500;
}
.tab-badge {
  width: 32px;
  height: 32px;
  border-radius: 7px;
  background: #9896a4;
  line-height: 32px;
  text-align: center;
}
.favicon-b {
  width: 32px;
  height: 32px;
  border-radius: 5px;
  background: linear-gradient(135deg, #8a1ffb, #5d17de);
  color: #fff;
  font-size: 27px;
  line-height: 32px;
  text-align: center;
}

/* Page */
.page { position: relative; flex: 1; background: #fff; overflow: hidden; }
.page::after {
  content: "";
  position: absolute;
  left: 0;
  right: 0;
  bottom: 0;
  height: 70px;
  background: linear-gradient(rgba(0, 0, 0, 0), rgba(0, 0, 0, .035) 50%, rgba(0, 0, 0, .1));
  -webkit-mask-image: linear-gradient(90deg, transparent 0, #000 140px, #000 calc(100% - 170px), transparent 100%);
  mask-image: linear-gradient(90deg, transparent 0, #000 140px, #000 calc(100% - 170px), transparent 100%);
}
.navbar { height: 109px; background: #f8f9fc; }
.heading {
  display: flex;
  flex-direction: column;
  align-items: center;
  height: 416.500px;
  padding-left: 396px;
  padding-top: 37px;
}
.title {
  margin: 0;
  color: #212529;
  font-size: 65.6px;
  font-weight: 500;
  line-height: 81px;
  letter-spacing: -.1px;
  white-space: nowrap;
}
.btn {
  display: flex;
  align-items: center;
  justify-content: center;
  width: 192px;
  height: 91px;
  border: 4px solid #418859;
  border-radius: 14px;
  color: #418859;
  font-size: 37.2px;
  letter-spacing: .9px;
}
.btn-primary { width: 117px; margin-top: 132px; background: #316df5; border-color: #316df5; color: #fff; }
.btn-solid { background: #418859; color: #fff; }
.rule { height: 4px; background: #dfe2e7; }
.filters { padding-top: 38px; }
.row { display: grid; column-gap: 19px; height: 91px; margin: 0 -20px 113px; }
.wide { grid-template-columns: 1383px 192px 1fr; }
.thirds { grid-template-columns: 361px 192px 1813px 193px 1fr; }
.full { grid-template-columns: 1fr; }
.field {
  display: flex;
  align-items: center;
  height: 91px;
  padding: 0 29px 0 27.500px;
  border: 4px solid #dfe3e8;
  border-radius: 14px;
  color: #575a5d;
  font-size: 37.2px;
  letter-spacing: .83px;
  white-space: nowrap;
}
.last, .mid { margin-left: 169px; }
.focus {
  color: #212529;
  letter-spacing: .75px;
  border-color: #8fb5fa;
  box-shadow: 0 0 0 10px #cbd9fc;
}
.caret { width: 8px; height: 46px; border-radius: 4px; background: #212529; }
.clear { margin-left: auto; margin-right: 2px; }

/* Dock */
.dock {
  position: relative;
  display: flex;
  align-items: center;
  width: 2783px;
  height: 118px;
  margin: 14px 0 0 79px;
  padding: 0 3px 10px;
  border: 2px solid #3e4b58;
  border-radius: 34px;
  background: linear-gradient(90deg, #17213a, #15263c 25%, #15243a 45%, #15262f 65%, #1c303b);
}
.app { position: relative; display: flex; justify-content: center; flex: none; width: 96px; }
.app svg { width: 72px; height: 72px; overflow: visible; }
.big svg { width: 86px; height: 86px; }
.petals { isolation: isolate; }
.petals rect { mix-blend-mode: multiply; }
.open::after {
  content: "";
  position: absolute;
  left: 44px;
  bottom: -24px;
  width: 8px;
  height: 8px;
  border-radius: 50%;
  background: #98a8b9;
}
.big.open::after { bottom: -17px; }
.reminders { margin-right: -2px; }
.dock-split { flex: none; width: 2px; height: 86px; margin: 10px 20px 0; background: #55636e; }
.dock-split.first { margin: 10px 20px 0 22px; }
```
